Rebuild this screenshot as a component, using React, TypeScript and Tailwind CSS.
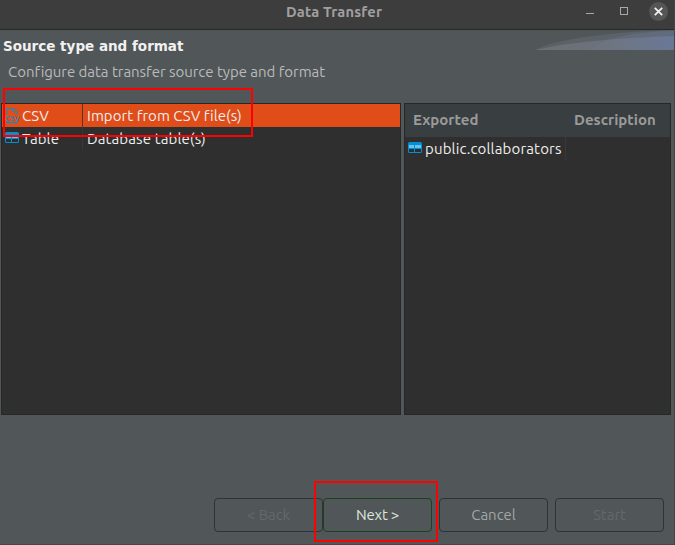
import React from "react";

function TableIcon() {
  return (
    <svg width="14" height="12" viewBox="0 0 14 12" className="shrink-0">
      <rect x="0" y="0" width="14" height="11" rx="1.500" fill="#078ed0" />
      <rect x="1" y="3" width="5" height="3" fill="#62c4f1" />
      <rect x="7" y="3" width="6" height="3" fill="#62c4f1" />
      <rect x="1" y="7" width="5" height="3" fill="#2d2d2d" />
      <rect x="7" y="7" width="6" height="3" fill="#2d2d2d" />
    </svg>
  );
}

function CsvIcon() {
  return (
    <svg width="15" height="16" viewBox="0 0 15 16" className="shrink-0 overflow-visible" fill="none" stroke="#078ed0">
      <path d="M1.500 6.500V.500H9l3 3v3M8.500 .500v3.500H12M1.500 13v1.500h10.500V13" />
      <text
        x="0.200"
        y="12.500"
        textLength="14.500"
        lengthAdjust="spacingAndGlyphs"
        className="text-[8px] font-medium tracking-normal"
        fill="#078ed0"
        stroke="none"
      >
        CSV
      </text>
    </svg>
  );
}

function WindowControls() {
  return (
    <div className="flex h-[22px] items-center">
      <svg width="42" height="22" viewBox="0 0 42 22" fill="none" stroke="#a8a8a8" shapeRendering="crispEdges">
        <path d="M0 13.5h8" />
        <rect x="34.500" y="7.500" width="7" height="7" />
      </svg>
      <div className="ml-[21px] flex size-[19px] items-center justify-center rounded-full bg-[#565656]">
        <svg width="9" height="9" viewBox="0 0 9 9" stroke="#f4f4f4" strokeWidth="1.700">
          <path d="M.800.800l7.400 7.400M8.200.800L.800 8.200" />
        </svg>
      </div>
    </div>
  );
}

function Banner() {
  return (
    <svg width="140" height="20" viewBox="0 0 140 20">
      <defs>
        <linearGradient id="sweep" x1="0" x2="1">
          <stop offset="0" stopColor="#8b8b90" stopOpacity=".35" />
          <stop offset=".5" stopColor="#8b8e9b" stopOpacity=".35" />
          <stop offset="1" stopColor="#7283b4" stopOpacity=".55" />
        </linearGradient>
        <linearGradient id="haze" x1="0" x2="1">
          <stop offset="0" stopColor="#747b88" stopOpacity=".3" />
          <stop offset="1" stopColor="#6f80a0" stopOpacity=".3" />
        </linearGradient>
      </defs>
      <path d="M1 20C25 8 80 2 140 0V20z" fill="url(#haze)" />
      <path d="M1 20C40 11 90 8 140 6V20z" fill="url(#sweep)" />
      <path d="M57 20C68 8 100 2 140 1V20z" fill="url(#haze)" />
    </svg>
  );
}

const buttonBase = "flex h-[34px] w-[109px] items-center justify-center rounded-[4px] border pb-px";

export default function App() {
  return (
    <div className="relative flex h-[545px] w-[675px] flex-col overflow-hidden border-r border-b border-[#42474a] bg-[#515658] font-['Ubuntu','Noto_Sans',sans-serif] text-[15px] leading-[20px] whitespace-nowrap">
      <header className="flex h-[30px] shrink-0 border-b border-[#292929] bg-[#3d3d3d]">
        <div className="w-[286px]" />
        <h1 className="w-[300px] pt-[2px] text-[14.667px] font-bold tracking-[0.18px] text-[#a0a0a0]">Data Transfer</h1>
        <WindowControls />
      </header>

      <section className="flex h-[73px] shrink-0 justify-between">
        <div>
          <h2 className="pt-[6px] pl-[3px] font-['DejaVu_Sans',sans-serif] text-[13.5px] font-bold text-[#f1f1f1]">Source type and format</h2>
          <p className="pt-[6px] pl-[8px] tracking-[-0.04px] text-[#b9bbbb]">Configure data transfer source type and format</p>
        </div>
        <Banner />
      </section>

      <main className="flex h-[312px] shrink-0 gap-[3px] pl-px">
        <div className="w-[400px] border border-[#272929] bg-[#2f2f2f] text-[#eeeeee]">
          <div className="flex h-[23px] bg-[#e04d18]">
            <div className="flex w-[81px] items-center gap-px border-r border-[#5e3427] pl-[3px]">
              <CsvIcon />
              <span className="pl-px">CSV</span>
            </div>
            <span className="pt-[2px] pl-[4px] tracking-[0.04px]">Import from CSV file(s)</span>
          </div>
          <div className="flex h-[23px] tracking-[0.12px]">
            <div className="flex w-[81px] items-start gap-[3px] border-r border-[#393939] pt-[5px] pl-[3px]">
              <TableIcon />
              <span className="-mt-[3px]">Table</span>
            </div>
            <span className="pt-[2px] pl-[4px]">Database table(s)</span>
          </div>
        </div>
        <div className="w-[267px] border border-[#272929] bg-[#2f2f2f]">
          <div className="flex h-[33px] bg-[#393e40] pt-[6px] font-bold text-[#999b9b]">
            <span className="w-[161px] pl-[8px]">Exported</span>
            <span className="pl-[8px]">Description</span>
          </div>
          <div className="flex h-[23px] w-[161px] items-start gap-[3px] border-r border-[#393939] pt-[5px] pl-[3px] tracking-[0.15px] text-[#eeeeee]">
            <TableIcon />
            <span className="-mt-[3px]">public.collaborators</span>
          </div>
        </div>
      </main>

      <footer className="flex pt-[83px] pl-[214px]">
        <button className={`${buttonBase} tracking-[-0.1px] border-[#303233] text-[#656867]`}>&lt; Back</button>
        <button className={`${buttonBase} tracking-[-0.2px] border-[#1c411e] text-[#dce6dc]`}>Next &gt;</button>
        <button className={`${buttonBase} ml-[7px] border-[#303233] text-[#a3a6a6]`}>Cancel</button>
        <button className={`${buttonBase} ml-[7px] border-[#303233] text-[#656867]`}>Start</button>
      </footer>

      <div className="pointer-events-none absolute top-[88px] left-[3px] h-[49px] w-[250px] border-2 border-[#ff0000]" />
      <div className="pointer-events-none absolute top-[481px] left-[314px] h-[61px] w-[124px] border-2 border-[#ff0000]" />
    </div>
  );
}
